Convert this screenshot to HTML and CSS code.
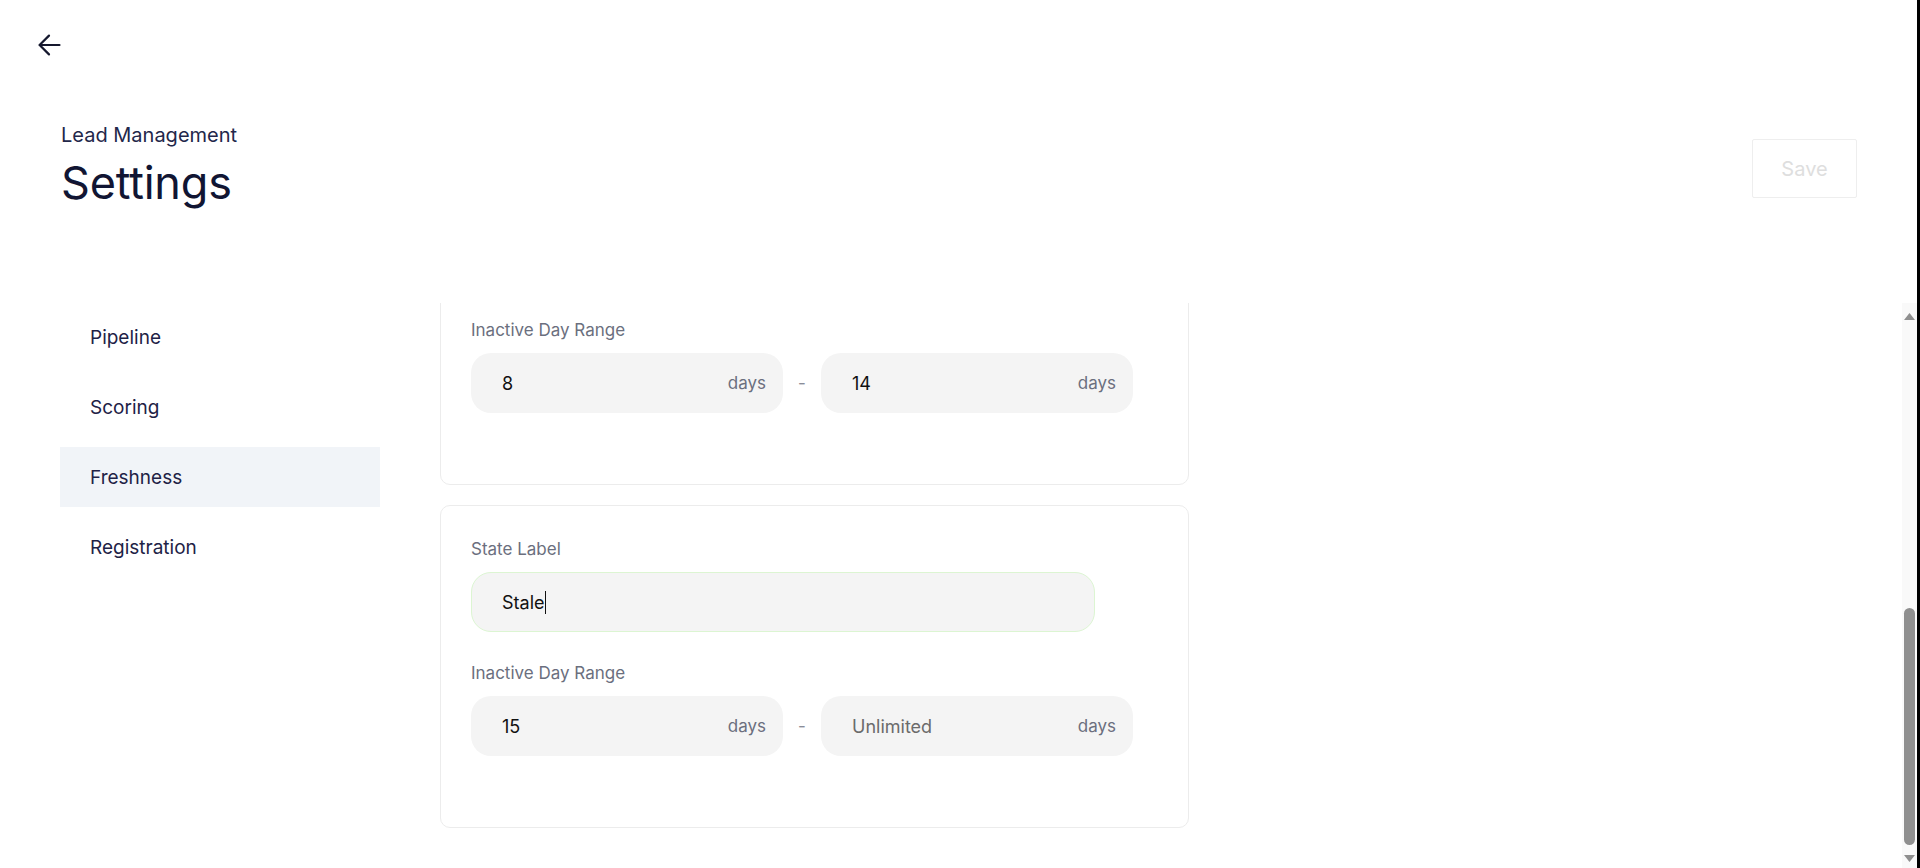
FILE: index.html
```html
<!DOCTYPE html>
<html lang="en">
<head>
<meta charset="utf-8">
<title>Settings · Lead Management</title>
<link rel="stylesheet" href="styles.css">
</head>
<body>
<div class="app">
  <div class="topbar">
    <button class="back" type="button" aria-label="Back">
      <svg width="23" height="22" viewBox="0 0 23 22" fill="none" stroke="currentColor" stroke-width="2.2" stroke-linecap="round" stroke-linejoin="round">
        <path d="M21.5 11H1.8"/>
        <path d="M11 1.6L1.6 11l9.4 9.4"/>
      </svg>
    </button>
  </div>

  <header class="page-head">
    <div class="titles">
      <div class="eyebrow">Lead Management</div>
      <h1 class="title">Settings</h1>
    </div>
    <button class="save" type="button" disabled>Save</button>
  </header>

  <div class="main">
    <nav class="side">
      <a class="side-item" href="#">Pipeline</a>
      <a class="side-item" href="#">Scoring</a>
      <a class="side-item active" href="#">Freshness</a>
      <a class="side-item" href="#">Registration</a>
    </nav>

    <div class="pane">
      <div class="pane-inner">
        <section class="card">
          <div class="field">
            <div class="field-label">State Label</div>
            <div class="input input-wide"><span class="value">Warm</span></div>
          </div>
          <div class="field">
            <div class="field-label">Inactive Day Range</div>
            <div class="range">
              <div class="input"><span class="value">8</span><span class="unit">days</span></div>
              <span class="range-sep">-</span>
              <div class="input"><span class="value">14</span><span class="unit">days</span></div>
            </div>
          </div>
        </section>

        <section class="card">
          <div class="field">
            <div class="field-label">State Label</div>
            <div class="input input-wide focused"><span class="value">Stale</span><span class="caret"></span></div>
          </div>
          <div class="field">
            <div class="field-label">Inactive Day Range</div>
            <div class="range">
              <div class="input"><span class="value">15</span><span class="unit">days</span></div>
              <span class="range-sep">-</span>
              <div class="input"><span class="value placeholder">Unlimited</span><span class="unit">days</span></div>
            </div>
          </div>
        </section>
      </div>
    </div>

    <div class="scrollbar" aria-hidden="true">
      <div class="sb-btn sb-up">
        <svg width="11" height="7" viewBox="0 0 11 7"><path d="M5.5 0L11 7H0z" fill="#8f8f8f"/></svg>
      </div>
      <div class="sb-track">
        <div class="sb-thumb"></div>
      </div>
      <div class="sb-btn sb-down">
        <svg width="11" height="7" viewBox="0 0 11 7"><path d="M0 0h11L5.5 7z" fill="#8f8f8f"/></svg>
      </div>
    </div>
  </div>
</div>
</body>
</html>
```

FILE: styles.css
```css
* {
  box-sizing: border-box;
}

html,
body {
  margin: 0;
  height: 100%;
}

body {
  font-family: Inter, "Noto Sans", "Liberation Sans", sans-serif;
  background: #fff;
  color: #161a3a;
  overflow: hidden;
}

.app {
  height: 100vh;
  display: flex;
  flex-direction: column;
  border-right: 3px solid #000;
}

/* top bar with the back arrow */
.topbar {
  height: 56px;
  padding: 34px 0 0 38px;
  flex-shrink: 0;
}

.back {
  display: block;
  width: 23px;
  height: 22px;
  padding: 0;
  border: 0;
  background: none;
  color: #15182e;
  cursor: pointer;
}

.back svg {
  display: block;
}

/* page title + save action */
.page-head {
  display: flex;
  align-items: flex-start;
  justify-content: space-between;
  padding: 65px 60px 0 61px;
  flex-shrink: 0;
}

.eyebrow {
  font-size: 20px;
  line-height: 28px;
  color: #23274a;
}

.title {
  margin: 7px 0 0;
  font-size: 45px;
  line-height: 54px;
  font-weight: 400;
  color: #111533;
  letter-spacing: -0.2px;
}

.save {
  margin-top: 18px;
  width: 105px;
  height: 59px;
  border: 1px solid #eeeeee;
  border-radius: 2px;
  background: #fff;
  color: #dedede;
  font-family: inherit;
  font-size: 20px;
}

/* body: side navigation + scrolling content */
.main {
  flex: 1;
  min-height: 0;
  display: flex;
  margin-top: 93px;
  padding-left: 60px;
}

.side {
  width: 320px;
  flex-shrink: 0;
  padding-top: 4px;
  display: flex;
  flex-direction: column;
  gap: 10px;
}

.side-item {
  height: 60px;
  display: flex;
  align-items: center;
  padding-left: 30px;
  font-size: 19px;
  color: #1e2246;
  text-decoration: none;
}

.side-item.active {
  background: #f1f4f8;
}

/* column-reverse keeps the pane opened at its end */
.pane {
  flex: 1;
  min-width: 0;
  overflow-y: auto;
  scrollbar-width: none;
  display: flex;
  flex-direction: column-reverse;
  padding-left: 60px;
}

.pane-inner {
  width: 749px;
  flex-shrink: 0;
  display: flex;
  flex-direction: column;
  gap: 20px;
  padding: 4px 0 40px;
}

.card {
  border: 1px solid #ececec;
  border-radius: 10px;
  padding: 31px 55px 71px 30px;
}

.field + .field {
  margin-top: 29px;
}

.field-label {
  font-size: 17px;
  line-height: 24px;
  color: #6b6f7e;
  margin-bottom: 11px;
}

.input {
  height: 60px;
  display: flex;
  align-items: center;
  padding: 0 16px 0 30px;
  border: 1px solid transparent;
  border-radius: 20px;
  background: #f4f4f4;
  font-size: 18px;
  color: #111;
}

.input-wide {
  width: 624px;
}

.input.focused {
  border-color: #dcf5d2;
}

.caret {
  width: 1px;
  height: 23px;
  background: #111;
}

.range {
  display: flex;
  align-items: center;
}

.range .input {
  width: 312px;
}

.range-sep {
  width: 38px;
  text-align: center;
  font-size: 17px;
  color: #8a8d99;
}

.unit {
  margin-left: auto;
  font-size: 17px;
  color: #6b6f7e;
}

.placeholder {
  color: #6b6b6b;
}

/* vertical scroll rail of the content pane */
.scrollbar {
  width: 15px;
  flex-shrink: 0;
  display: flex;
  flex-direction: column;
  background: #f9f9f9;
}

.sb-btn {
  display: flex;
  justify-content: center;
}

.sb-up {
  height: 24px;
  align-items: flex-end;
  padding-bottom: 7px;
}

.sb-down {
  height: 20px;
  align-items: center;
}

.sb-btn svg {
  display: block;
}

.sb-track {
  flex: 1;
  display: flex;
  flex-direction: column;
  justify-content: flex-end;
  align-items: center;
  padding-bottom: 3px;
}

.sb-thumb {
  width: 11px;
  height: 237px;
  border-radius: 6px;
  background: #8f8f8f;
}
```
